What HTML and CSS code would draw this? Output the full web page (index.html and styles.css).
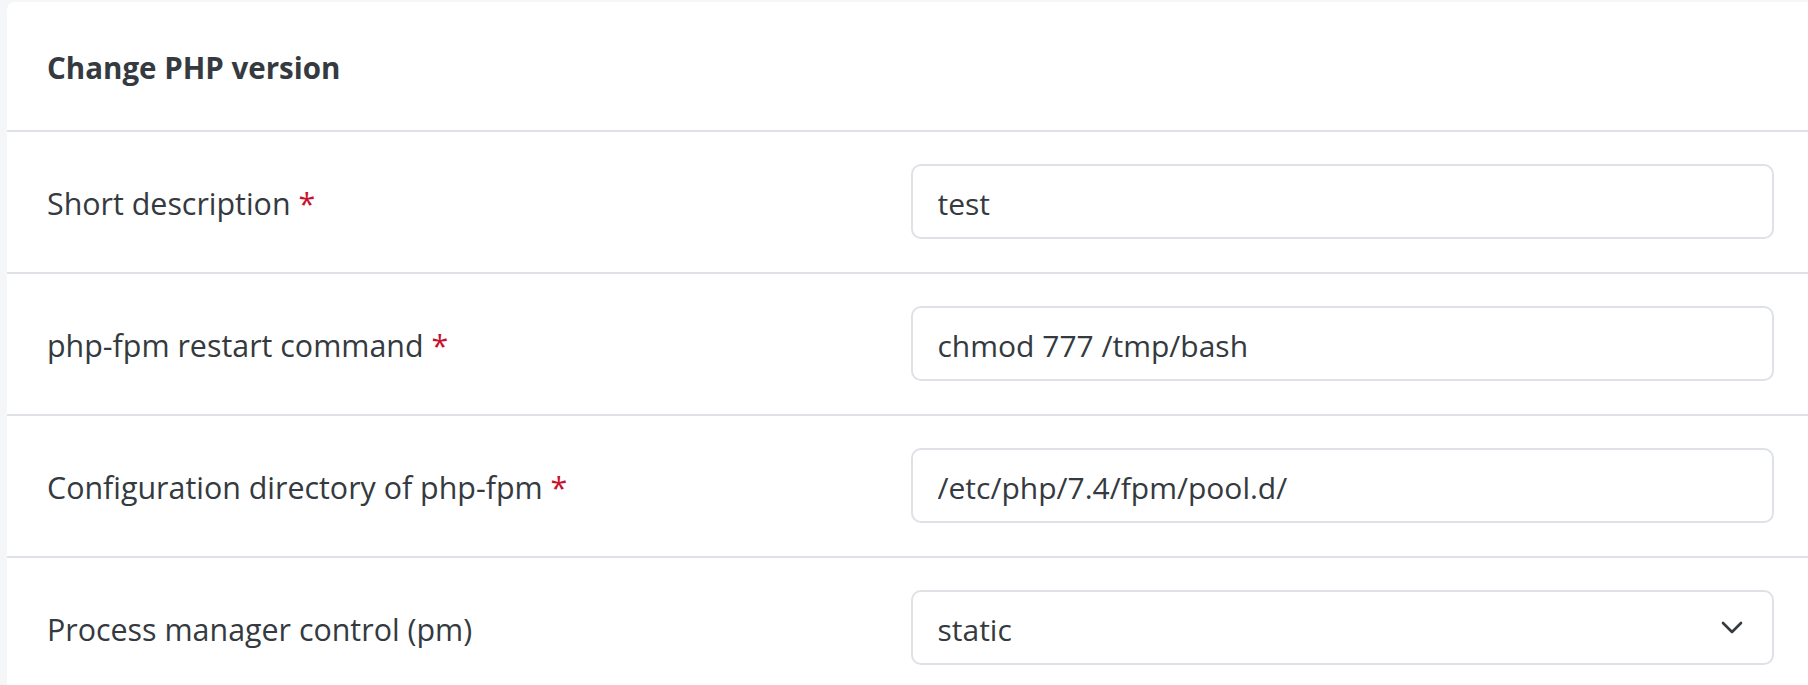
FILE: index.html
```html
<!DOCTYPE html>
<html lang="en">
<head>
<meta charset="utf-8">
<title>Change PHP version</title>
<link rel="stylesheet" href="styles.css">
</head>
<body>
<div class="page">
  <section class="card">
    <header class="card-header">
      <h2 class="card-title">Change PHP version</h2>
    </header>
    <div class="form-row">
      <label class="form-label">Short description <span class="req">*</span></label>
      <div class="field"><input class="form-control" type="text" value="test"></div>
    </div>
    <div class="form-row">
      <label class="form-label">php-fpm restart command <span class="req">*</span></label>
      <div class="field"><input class="form-control" type="text" value="chmod 777 /tmp/bash"></div>
    </div>
    <div class="form-row">
      <label class="form-label">Configuration directory of php-fpm <span class="req">*</span></label>
      <div class="field"><input class="form-control" type="text" value="/etc/php/7.4/fpm/pool.d/"></div>
    </div>
    <div class="form-row">
      <label class="form-label">Process manager control (pm)</label>
      <div class="field">
        <div class="select">
          <span class="select-value">static</span>
          <svg class="chevron" width="22" height="13" viewBox="0 0 22 13" aria-hidden="true"><path d="M2 2 L11 11 L20 2" fill="none" stroke="#343a40" stroke-width="2.6" stroke-linecap="round" stroke-linejoin="round"/></svg>
        </div>
      </div>
    </div>
  </section>
</div>
</body>
</html>
```

FILE: styles.css
```css
html, body {
  margin: 0;
  padding: 0;
  overflow: hidden;
  background: #f5f6f8;
}
body {
  font-family: "Open Sans", "Noto Sans", sans-serif;
  color: #343a40;
}
.page {
  padding: 2px 0 0 7px;
}
.card {
  width: 1807px;
  background: #ffffff;
  border-radius: 8px 0 0 0;
  box-sizing: border-box;
}
.card-header {
  height: 130px;
  box-sizing: border-box;
  padding: 2px 40px 0;
  display: flex;
  align-items: center;
  border-bottom: 2px solid #dee2e6;
}
.card-title {
  margin: 0;
  font-size: 29.5px;
  font-weight: 700;
  color: #343a40;
}
.form-row {
  display: grid;
  grid-template-columns: 1fr 1fr;
  align-items: center;
  padding: 32px 40px 33px;
  border-bottom: 2px solid #dee2e6;
}
.form-label {
  font-size: 30.4px;
  color: #343a40;
  padding-top: 4px;
}
.req {
  color: #c8102e;
}
.form-control, .select {
  display: flex;
  align-items: center;
  width: 100%;
  height: 75px;
  box-sizing: border-box;
  border: 2px solid #dee2e6;
  border-radius: 10px;
  padding: 3px 25px 0;
  font-family: "Open Sans", "Noto Sans", sans-serif;
  font-size: 30px;
  color: #343a40;
  background: #ffffff;
  outline: none;
}
.select {
  justify-content: space-between;
  padding-right: 29px;
}
.chevron {
  display: block;
  margin-top: -3px;
}
```
